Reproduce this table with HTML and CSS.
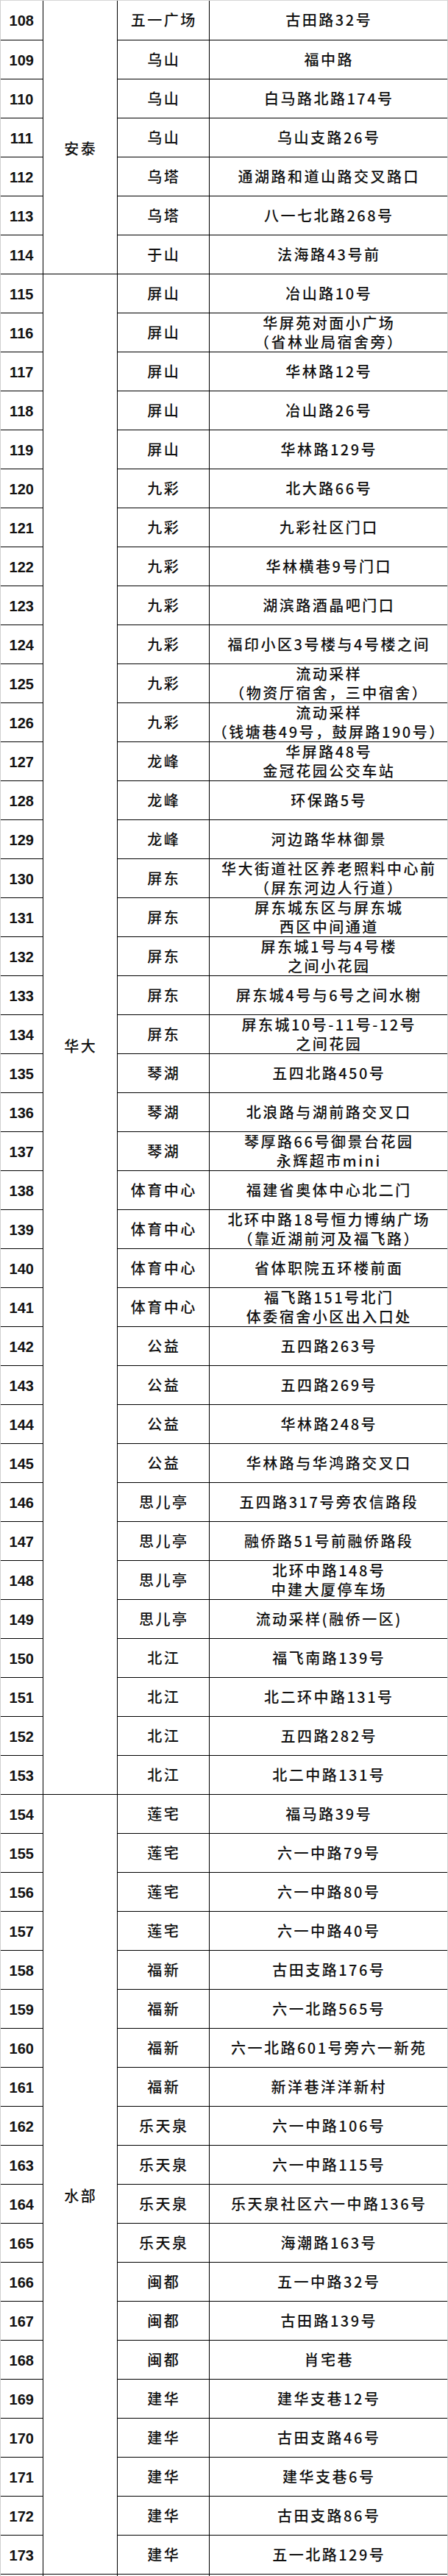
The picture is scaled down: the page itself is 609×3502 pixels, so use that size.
FILE: index.html
```html
<!DOCTYPE html>
<html lang="zh-CN">
<head>
<meta charset="utf-8">
<title>核酸采样点</title>
<link rel="stylesheet" href="styles.css">
</head>
<body>
<div class="page">
<table class="sheet">
<colgroup><col class="c-no"><col class="c-area"><col class="c-site"><col class="c-addr"></colgroup>
<tbody>
<tr><td class="no">108</td><td class="area" rowspan="7">安泰</td><td class="site">五一广场</td><td class="addr">古田路32号</td></tr>
<tr><td class="no">109</td><td class="site">乌山</td><td class="addr">福中路</td></tr>
<tr><td class="no">110</td><td class="site">乌山</td><td class="addr">白马路北路174号</td></tr>
<tr><td class="no">111</td><td class="site">乌山</td><td class="addr">乌山支路26号</td></tr>
<tr><td class="no">112</td><td class="site">乌塔</td><td class="addr">通湖路和道山路交叉路口</td></tr>
<tr><td class="no">113</td><td class="site">乌塔</td><td class="addr">八一七北路268号</td></tr>
<tr><td class="no">114</td><td class="site">于山</td><td class="addr">法海路43号前</td></tr>
<tr><td class="no">115</td><td class="area" rowspan="39">华大</td><td class="site">屏山</td><td class="addr">冶山路10号</td></tr>
<tr><td class="no">116</td><td class="site">屏山</td><td class="addr">华屏苑对面小广场<br>（省林业局宿舍旁）</td></tr>
<tr><td class="no">117</td><td class="site">屏山</td><td class="addr">华林路12号</td></tr>
<tr><td class="no">118</td><td class="site">屏山</td><td class="addr">冶山路26号</td></tr>
<tr><td class="no">119</td><td class="site">屏山</td><td class="addr">华林路129号</td></tr>
<tr><td class="no">120</td><td class="site">九彩</td><td class="addr">北大路66号</td></tr>
<tr><td class="no">121</td><td class="site">九彩</td><td class="addr">九彩社区门口</td></tr>
<tr><td class="no">122</td><td class="site">九彩</td><td class="addr">华林横巷9号门口</td></tr>
<tr><td class="no">123</td><td class="site">九彩</td><td class="addr">湖滨路酒晶吧门口</td></tr>
<tr><td class="no">124</td><td class="site">九彩</td><td class="addr">福印小区3号楼与4号楼之间</td></tr>
<tr><td class="no">125</td><td class="site">九彩</td><td class="addr">流动采样<br>（物资厅宿舍，三中宿舍）</td></tr>
<tr><td class="no">126</td><td class="site">九彩</td><td class="addr">流动采样<br>（钱塘巷49号，鼓屏路190号）</td></tr>
<tr><td class="no">127</td><td class="site">龙峰</td><td class="addr">华屏路48号<br>金冠花园公交车站</td></tr>
<tr><td class="no">128</td><td class="site">龙峰</td><td class="addr">环保路5号</td></tr>
<tr><td class="no">129</td><td class="site">龙峰</td><td class="addr">河边路华林御景</td></tr>
<tr><td class="no">130</td><td class="site">屏东</td><td class="addr">华大街道社区养老照料中心前<br>（屏东河边人行道）</td></tr>
<tr><td class="no">131</td><td class="site">屏东</td><td class="addr">屏东城东区与屏东城<br>西区中间通道</td></tr>
<tr><td class="no">132</td><td class="site">屏东</td><td class="addr">屏东城1号与4号楼<br>之间小花园</td></tr>
<tr><td class="no">133</td><td class="site">屏东</td><td class="addr">屏东城4号与6号之间水榭</td></tr>
<tr><td class="no">134</td><td class="site">屏东</td><td class="addr">屏东城10号-11号-12号<br>之间花园</td></tr>
<tr><td class="no">135</td><td class="site">琴湖</td><td class="addr">五四北路450号</td></tr>
<tr><td class="no">136</td><td class="site">琴湖</td><td class="addr">北浪路与湖前路交叉口</td></tr>
<tr><td class="no">137</td><td class="site">琴湖</td><td class="addr">琴厚路66号御景台花园<br>永辉超市mini</td></tr>
<tr><td class="no">138</td><td class="site">体育中心</td><td class="addr">福建省奥体中心北二门</td></tr>
<tr><td class="no">139</td><td class="site">体育中心</td><td class="addr">北环中路18号恒力博纳广场<br>（靠近湖前河及福飞路）</td></tr>
<tr><td class="no">140</td><td class="site">体育中心</td><td class="addr">省体职院五环楼前面</td></tr>
<tr><td class="no">141</td><td class="site">体育中心</td><td class="addr">福飞路151号北门<br>体委宿舍小区出入口处</td></tr>
<tr><td class="no">142</td><td class="site">公益</td><td class="addr">五四路263号</td></tr>
<tr><td class="no">143</td><td class="site">公益</td><td class="addr">五四路269号</td></tr>
<tr><td class="no">144</td><td class="site">公益</td><td class="addr">华林路248号</td></tr>
<tr><td class="no">145</td><td class="site">公益</td><td class="addr">华林路与华鸿路交叉口</td></tr>
<tr><td class="no">146</td><td class="site">思儿亭</td><td class="addr">五四路317号旁农信路段</td></tr>
<tr><td class="no">147</td><td class="site">思儿亭</td><td class="addr">融侨路51号前融侨路段</td></tr>
<tr><td class="no">148</td><td class="site">思儿亭</td><td class="addr">北环中路148号<br>中建大厦停车场</td></tr>
<tr><td class="no">149</td><td class="site">思儿亭</td><td class="addr">流动采样(融侨一区)</td></tr>
<tr><td class="no">150</td><td class="site">北江</td><td class="addr">福飞南路139号</td></tr>
<tr><td class="no">151</td><td class="site">北江</td><td class="addr">北二环中路131号</td></tr>
<tr><td class="no">152</td><td class="site">北江</td><td class="addr">五四路282号</td></tr>
<tr><td class="no">153</td><td class="site">北江</td><td class="addr">北二中路131号</td></tr>
<tr><td class="no">154</td><td class="area" rowspan="20">水部</td><td class="site">莲宅</td><td class="addr">福马路39号</td></tr>
<tr><td class="no">155</td><td class="site">莲宅</td><td class="addr">六一中路79号</td></tr>
<tr><td class="no">156</td><td class="site">莲宅</td><td class="addr">六一中路80号</td></tr>
<tr><td class="no">157</td><td class="site">莲宅</td><td class="addr">六一中路40号</td></tr>
<tr><td class="no">158</td><td class="site">福新</td><td class="addr">古田支路176号</td></tr>
<tr><td class="no">159</td><td class="site">福新</td><td class="addr">六一北路565号</td></tr>
<tr><td class="no">160</td><td class="site">福新</td><td class="addr">六一北路601号旁六一新苑</td></tr>
<tr><td class="no">161</td><td class="site">福新</td><td class="addr">新洋巷洋洋新村</td></tr>
<tr><td class="no">162</td><td class="site">乐天泉</td><td class="addr">六一中路106号</td></tr>
<tr><td class="no">163</td><td class="site">乐天泉</td><td class="addr">六一中路115号</td></tr>
<tr><td class="no">164</td><td class="site">乐天泉</td><td class="addr">乐天泉社区六一中路136号</td></tr>
<tr><td class="no">165</td><td class="site">乐天泉</td><td class="addr">海潮路163号</td></tr>
<tr><td class="no">166</td><td class="site">闽都</td><td class="addr">五一中路32号</td></tr>
<tr><td class="no">167</td><td class="site">闽都</td><td class="addr">古田路139号</td></tr>
<tr><td class="no">168</td><td class="site">闽都</td><td class="addr">肖宅巷</td></tr>
<tr><td class="no">169</td><td class="site">建华</td><td class="addr">建华支巷12号</td></tr>
<tr><td class="no">170</td><td class="site">建华</td><td class="addr">古田支路46号</td></tr>
<tr><td class="no">171</td><td class="site">建华</td><td class="addr">建华支巷6号</td></tr>
<tr><td class="no">172</td><td class="site">建华</td><td class="addr">古田支路86号</td></tr>
<tr><td class="no">173</td><td class="site">建华</td><td class="addr">五一北路129号</td></tr>
<tr><td class="no"></td><td class="area"></td><td class="site"></td><td class="addr"></td></tr>
</tbody>
</table>
</div>
</body>
</html>
```
FILE: styles.css
```css
html, body {
  margin: 0;
  padding: 0;
  background: #fff;
}

.page {
  box-sizing: border-box;
  width: 609px;
  height: 3502px;
  overflow: hidden;
  border-left: 1px solid #cfcfcf;
  border-top: 1px solid #d6d6d6;
  border-right: 1px solid #cfcfcf;
  background: #fff;
}

.sheet {
  border-collapse: collapse;
  table-layout: fixed;
  width: 607px;
  color: #111;
  font-family: "Noto Sans CJK SC", "Liberation Sans", sans-serif;
  font-size: 20px;
  font-weight: 500;
}

.c-no { width: 57px; }
.c-area { width: 101px; }
.c-site { width: 125px; }
.c-addr { width: 324px; }

.sheet tr {
  height: 53px;
}

.sheet td {
  border: 1px solid #000;
  padding: 0;
  text-align: center;
  vertical-align: middle;
  line-height: 26px;
  white-space: nowrap;
}

.sheet tr:first-child td {
  border-top: none;
}

.sheet td.no {
  border-left: none;
  padding-top: 2px;
  font-family: "Liberation Sans", "Noto Sans CJK SC", sans-serif;
  font-weight: 700;
  font-size: 20px;
}

.sheet td.site,
.sheet td.addr,
.sheet td.area {
  letter-spacing: 2.5px;
  padding-left: 2.5px;
}

.sheet td.area {
  padding-top: 32px;
}
```
